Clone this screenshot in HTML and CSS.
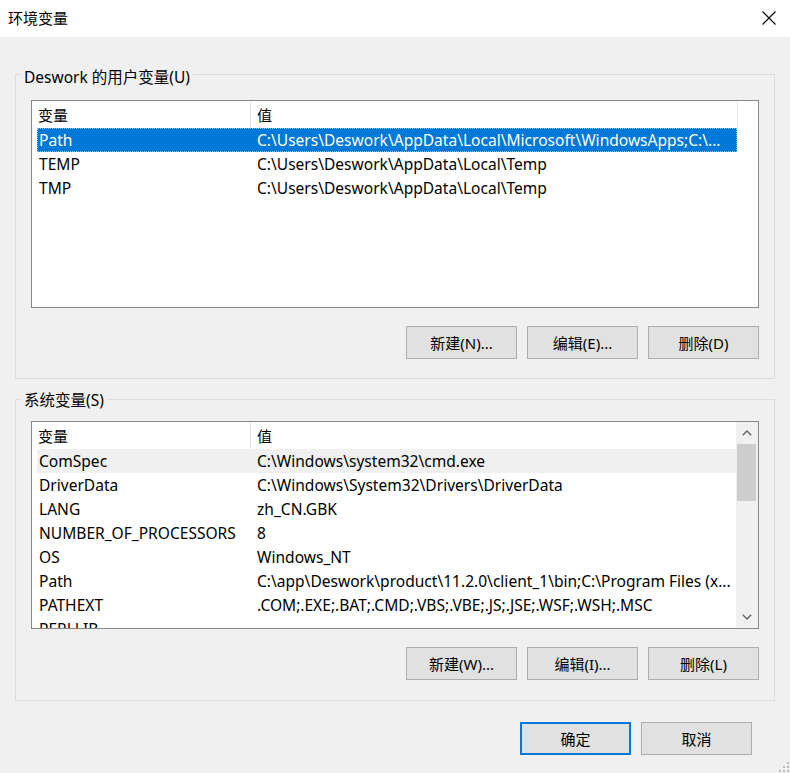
FILE: index.html
```html
<!DOCTYPE html>
<html lang="zh-CN">
<head>
<meta charset="utf-8">
<title>环境变量</title>
<link rel="stylesheet" href="styles.css">
</head>
<body>
<div class="window">
  <div class="titlebar">
    <span class="title">环境变量</span>
    <svg class="close" width="14" height="14" viewBox="0 0 14 14"><path d="M0.5 0.5 L13.5 13.5 M13.5 0.5 L0.5 13.5" stroke="#000" stroke-width="1.1" fill="none"/></svg>
  </div>
  <div class="main">
    <fieldset class="group group-user">
      <legend>Deswork 的用户变量(U)</legend>
      <div class="list">
        <div class="list-body">
          <div class="header">
            <div class="hcell hcell-name">变量</div>
            <div class="hcell hcell-value">值</div>
          </div>
          <div class="row selected"><div class="cell name">Path</div><div class="cell value">C:\Users\Deswork\AppData\Local\Microsoft\WindowsApps;C:\...</div></div>
          <div class="row"><div class="cell name">TEMP</div><div class="cell value">C:\Users\Deswork\AppData\Local\Temp</div></div>
          <div class="row"><div class="cell name">TMP</div><div class="cell value">C:\Users\Deswork\AppData\Local\Temp</div></div>
        </div>
      </div>
      <div class="buttons">
        <button class="btn">新建(N)...</button>
        <button class="btn">编辑(E)...</button>
        <button class="btn">删除(D)</button>
      </div>
    </fieldset>
    <fieldset class="group group-sys">
      <legend>系统变量(S)</legend>
      <div class="list">
        <div class="list-body">
          <div class="header">
            <div class="hcell hcell-name">变量</div>
            <div class="hcell hcell-value">值</div>
          </div>
          <div class="row hover"><div class="cell name">ComSpec</div><div class="cell value">C:\Windows\system32\cmd.exe</div></div>
          <div class="row"><div class="cell name">DriverData</div><div class="cell value">C:\Windows\System32\Drivers\DriverData</div></div>
          <div class="row"><div class="cell name">LANG</div><div class="cell value">zh_CN.GBK</div></div>
          <div class="row"><div class="cell name">NUMBER_OF_PROCESSORS</div><div class="cell value">8</div></div>
          <div class="row"><div class="cell name">OS</div><div class="cell value">Windows_NT</div></div>
          <div class="row"><div class="cell name">Path</div><div class="cell value">C:\app\Deswork\product\11.2.0\client_1\bin;C:\Program Files (x...</div></div>
          <div class="row"><div class="cell name">PATHEXT</div><div class="cell value">.COM;.EXE;.BAT;.CMD;.VBS;.VBE;.JS;.JSE;.WSF;.WSH;.MSC</div></div>
          <div class="row"><div class="cell name">PERLLIB</div><div class="cell value"></div></div>
        </div>
        <div class="scrollbar">
          <div class="sb-arrow">
            <svg width="10" height="6" viewBox="0 0 10 6"><path d="M0.8 5.2 L5 1 L9.2 5.2" stroke="#606060" stroke-width="1.3" fill="none"/></svg>
          </div>
          <div class="sb-track"><div class="sb-thumb"></div></div>
          <div class="sb-arrow">
            <svg width="10" height="6" viewBox="0 0 10 6"><path d="M0.8 0.8 L5 5 L9.2 0.8" stroke="#606060" stroke-width="1.3" fill="none"/></svg>
          </div>
        </div>
      </div>
      <div class="buttons">
        <button class="btn">新建(W)...</button>
        <button class="btn">编辑(I)...</button>
        <button class="btn">删除(L)</button>
      </div>
    </fieldset>
    <div class="footer">
      <button class="btn btn-default">确定</button>
      <button class="btn">取消</button>
    </div>
  </div>
  <svg class="grip" width="12" height="12" viewBox="0 0 12 12">
    <rect x="9" y="1" width="2" height="2" fill="#bcbcbc"/>
    <rect x="5" y="5" width="2" height="2" fill="#bcbcbc"/>
    <rect x="9" y="5" width="2" height="2" fill="#bcbcbc"/>
    <rect x="1" y="9" width="2" height="2" fill="#bcbcbc"/>
    <rect x="5" y="9" width="2" height="2" fill="#bcbcbc"/>
    <rect x="9" y="9" width="2" height="2" fill="#bcbcbc"/>
  </svg>
</div>
</body>
</html>
```

FILE: styles.css
```css
* { box-sizing: border-box; }
html, body { margin: 0; padding: 0; }
body {
  width: 790px;
  height: 773px;
  overflow: hidden;
  background: #f0f0f0;
  font-family: "Noto Sans", "Noto Sans CJK SC", sans-serif;
  font-size: 15px;
  color: #000;
}
.window {
  position: relative;
  width: 790px;
  height: 773px;
  background: #f0f0f0;
}
.titlebar {
  height: 37px;
  background: #fff;
  display: flex;
  align-items: center;
  justify-content: space-between;
  padding: 0 14px 1px 8px;
}
.title { font-size: 15px; line-height: 20px; }
.close { display: block; }
.main {
  padding: 24px 15px 0 15px;
}
.group {
  margin: 0;
  padding: 13px 15px 19px 15px;
  border: 1px solid #dcdcdc;
  min-inline-size: 0;
}
.group legend {
  padding: 6px 3px 0 3px;
  margin-left: -10px;
  line-height: 20px;
  font-size: 15.5px;
}
.group-sys {
  margin-top: 9px;
  padding-top: 11px;
  padding-bottom: 20px;
}
.group-sys legend { padding-top: 2px; }
.list {
  height: 208px;
  border: 1px solid #828790;
  background: #fff;
  display: flex;
  overflow: hidden;
}
.list-body {
  flex: 1;
  min-width: 0;
  overflow: hidden;
}
.header {
  display: flex;
  height: 27px;
  width: 706px;
}
.hcell {
  line-height: 27px;
  padding-top: 1px;
  border-right: 1px solid #e5e5e5;
  white-space: nowrap;
}
.hcell-name { width: 219px; padding-left: 6px; }
.hcell-value { width: 487px; padding-left: 6px; }
.row {
  display: flex;
  height: 24px;
  width: 700px;
  margin-left: 5px;
  line-height: 24px;
  font-size: 15.55px;
  white-space: nowrap;
}
.cell { overflow: hidden; }
.cell.name { width: 213px; padding-left: 2px; }
.cell.value { flex: 1; padding-left: 7px; }
.row.selected {
  background: #0078d7;
  color: #fff;
  outline: 1px dotted #8cc3ee;
  outline-offset: -1px;
}
.row.hover { background: #f0f0f0; }
.scrollbar {
  width: 22px;
  background: #f0f0f0;
  display: flex;
  flex-direction: column;
}
.sb-arrow {
  height: 22px;
  display: flex;
  align-items: center;
  justify-content: center;
}
.sb-arrow svg { display: block; }
.sb-track { flex: 1; }
.sb-thumb {
  height: 57px;
  margin: 0 2px 0 1px;
  background: #cdcdcd;
}
.buttons {
  display: flex;
  justify-content: flex-end;
  gap: 10px;
  margin-top: 18px;
}
.btn {
  width: 111px;
  height: 33px;
  margin: 0;
  padding: 0;
  background: #e1e1e1;
  border: 1px solid #adadad;
  font-family: "Noto Sans", "Noto Sans CJK SC", sans-serif;
  font-size: 15px;
  color: #000;
  line-height: 20px;
}
.btn-default {
  border: 2px solid #0078d7;
}
.footer {
  display: flex;
  justify-content: flex-end;
  gap: 10px;
  margin-top: 21px;
  padding-right: 23px;
}
.grip {
  position: absolute;
  right: 0;
  bottom: 0;
}
```
